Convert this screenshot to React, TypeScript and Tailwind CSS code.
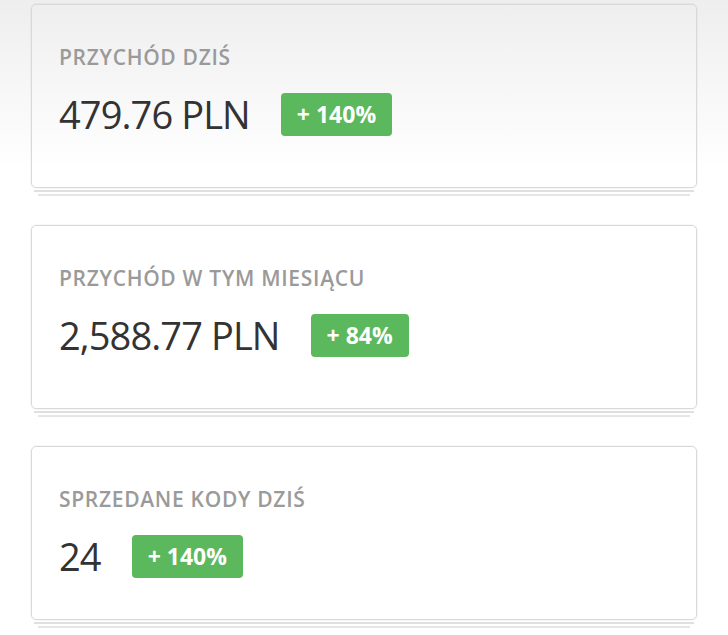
import React from "react";

type Stat = {
  label: string;
  value: string;
  change: string;
  last?: boolean;
};

const stats: Stat[] = [
  { label: "PRZYCHÓD DZIŚ", value: "479.76 PLN", change: "+ 140%" },
  { label: "PRZYCHÓD W TYM MIESIĄCU", value: "2,588.77 PLN", change: "+ 84%" },
  { label: "SPRZEDANE KODY DZIŚ", value: "24", change: "+ 140%", last: true },
];

function StatCard({ label, value, change, last }: Stat) {
  return (
    <div className="flex flex-col">
      <div
        className={
          "rounded-[5px] border border-[#d9d9d9] pl-[27px] pt-[38px] shadow-[0_0_0_1px_rgba(0,0,0,0.03)] " +
          (last ? "pb-[41px]" : "pb-[51px]")
        }
      >
        <div className="text-[21px] leading-[28px] font-semibold tracking-[0.7px] text-[#9a9a9a]">
          {label}
        </div>
        <div className="mt-[22px] flex items-center">
          <span className="text-[38px] leading-[43px] font-normal tracking-[-0.9px] text-[#333333]">
            {value}
          </span>
          <span className="ml-[31px] flex h-[43px] items-center rounded-[4px] bg-[#5cb85c] px-[16px] text-[23px] font-bold text-white">
            {change}
          </span>
        </div>
      </div>
      <div className="mx-[3px] h-[4px] border-b-2 border-[#e0e0e0]" />
      <div className="mx-[7px] h-[4px] border-b-2 border-[#e6e6e6]" />
    </div>
  );
}

export default function App() {
  return (
    <div
      className="min-h-[635px] bg-[linear-gradient(to_bottom,#eeeeee_0px,#ffffff_170px)] px-[31px] pt-[4px]"
      style={{ fontFamily: '"Open Sans", "Liberation Sans", sans-serif' }}
    >
      <div className="flex flex-col gap-[29px]">
        {stats.map((s) => (
          <StatCard key={s.label} {...s} />
        ))}
      </div>
    </div>
  );
}
